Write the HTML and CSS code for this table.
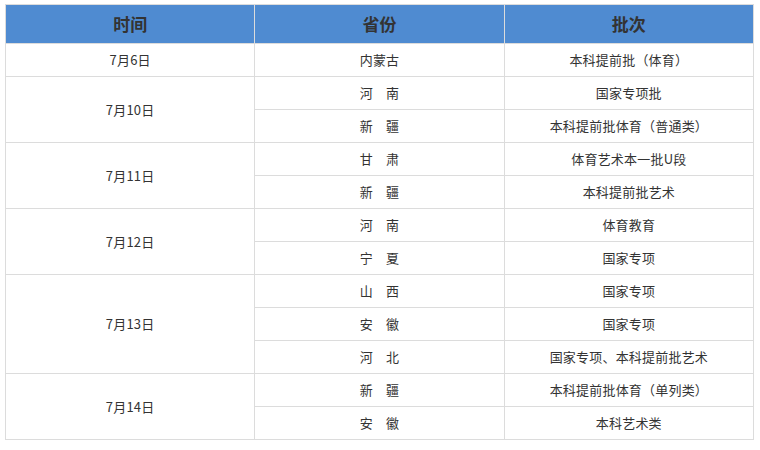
FILE: index.html
```html
<!DOCTYPE html>
<html lang="zh">
<head>
<meta charset="utf-8">
<link rel="stylesheet" href="styles.css">
</head>
<body>
<table class="sched">
  <thead>
    <tr><th>时间</th><th>省份</th><th>批次</th></tr>
  </thead>
  <tbody>
    <tr><td>7月6日</td><td>内蒙古</td><td>本科提前批（体育）</td></tr>
    <tr><td rowspan="2">7月10日</td><td>河　南</td><td>国家专项批</td></tr>
    <tr><td>新　疆</td><td>本科提前批体育（普通类）</td></tr>
    <tr><td rowspan="2">7月11日</td><td>甘　肃</td><td>体育艺术本一批U段</td></tr>
    <tr><td>新　疆</td><td>本科提前批艺术</td></tr>
    <tr><td rowspan="2">7月12日</td><td>河　南</td><td>体育教育</td></tr>
    <tr><td>宁　夏</td><td>国家专项</td></tr>
    <tr><td rowspan="3">7月13日</td><td>山　西</td><td>国家专项</td></tr>
    <tr><td>安　徽</td><td>国家专项</td></tr>
    <tr><td>河　北</td><td>国家专项、本科提前批艺术</td></tr>
    <tr><td rowspan="2">7月14日</td><td>新　疆</td><td>本科提前批体育（单列类）</td></tr>
    <tr><td>安　徽</td><td>本科艺术类</td></tr>
  </tbody>
</table>
</body>
</html>
```
FILE: styles.css
```css
html, body {
  margin: 0;
  padding: 0;
  background: #fff;
}
body {
  padding: 4px 0 0 5px;
  font-family: "Noto Sans CJK SC", "Noto Sans", sans-serif;
  color: #333;
  text-spacing-trim: space-all;
  font-feature-settings: "chws" 0, "halt" 0, "palt" 0;
}
.sched {
  border-collapse: collapse;
  width: 749px;
  table-layout: fixed;
}
.sched th, .sched td {
  border: 1px solid #dcdcdc;
  text-align: center;
  vertical-align: middle;
  padding: 0;
}
.sched th {
  background: #4f8bd1;
  height: 38px;
  font-size: 17px;
  font-weight: bold;
  color: #333;
  line-height: 38px;
}
.sched td {
  height: 32px;
  font-size: 13px;
  line-height: 20px;
  letter-spacing: 0.2px;
}
```
